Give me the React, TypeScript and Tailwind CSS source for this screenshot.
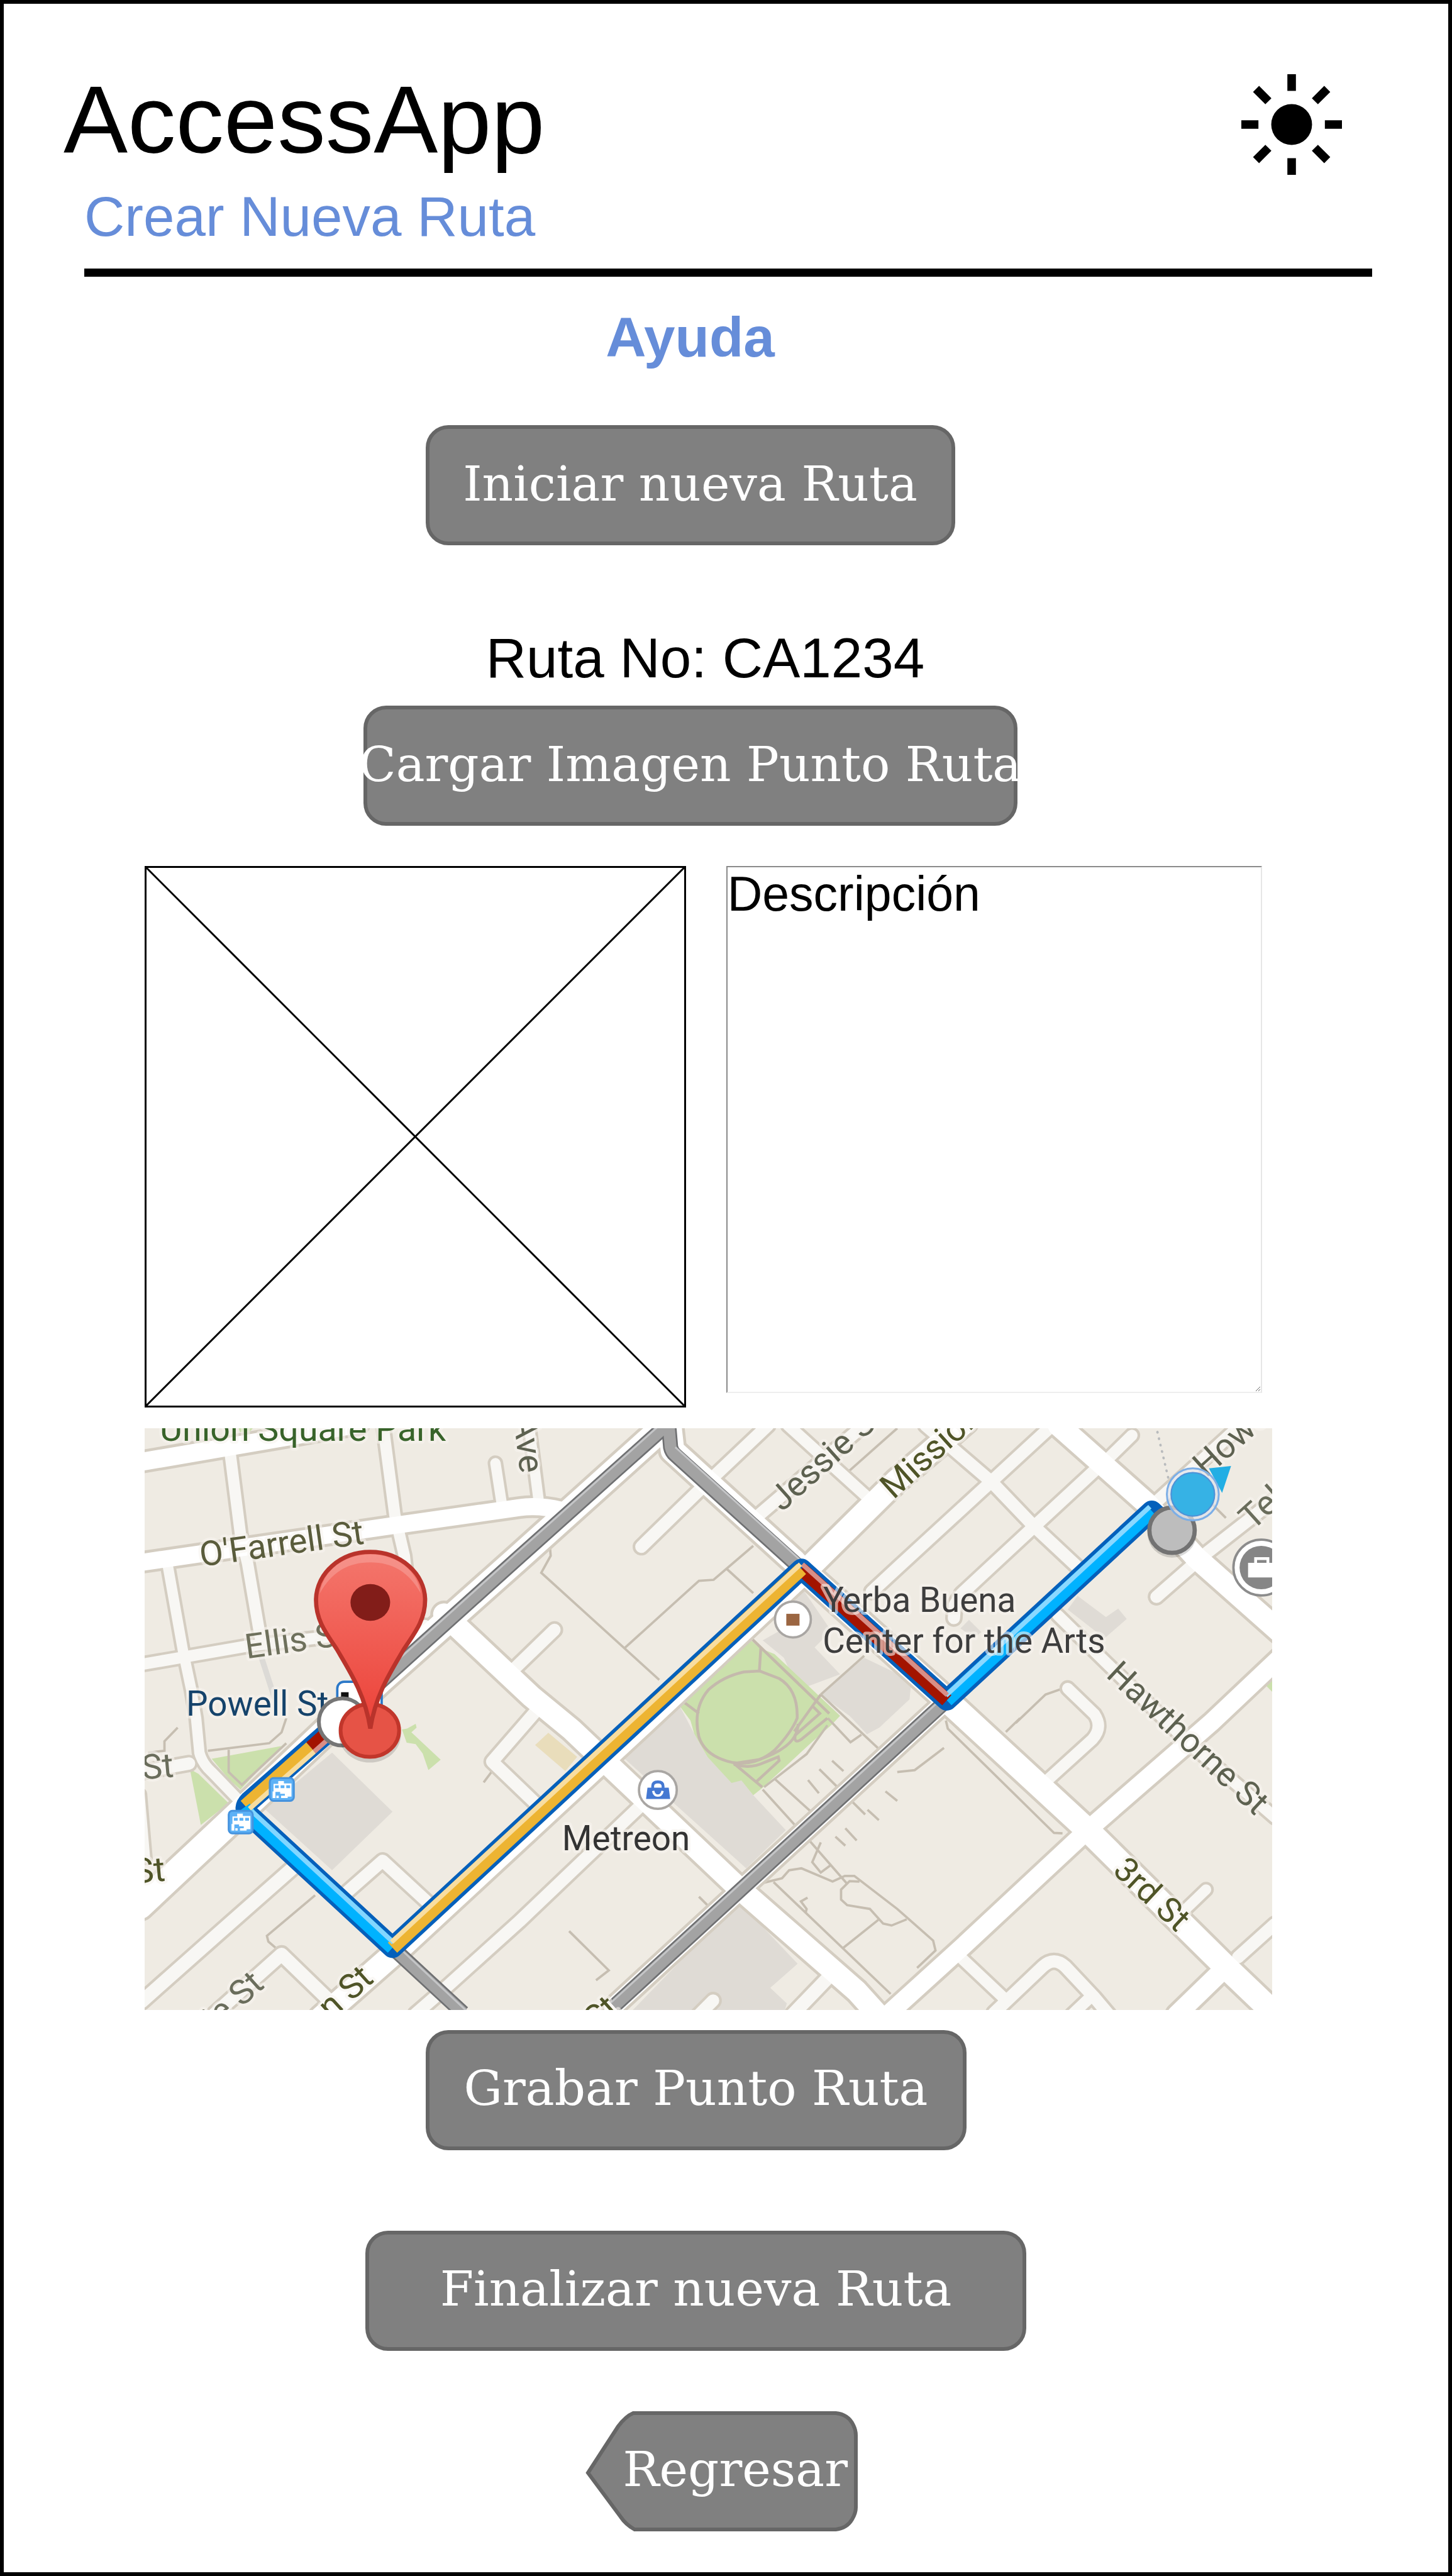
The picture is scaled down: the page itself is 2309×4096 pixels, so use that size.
import React from "react";

type Road = { d: string; w: number };

const SIDE_STREETS: Road[] = [
  { d: "M306 3525L519 3488L900 3444", w: 24 },
  { d: "M486 3070L509 3251L524 3312L552 3475", w: 24 },
  { d: "M811 3020L836 3210L856 3296L872 3440", w: 24 },
  { d: "M352 3300L387 3496L405 3581L415 3640L422 3713Q428 3736 448 3754L504 3812", w: 22 },
  { d: "M1049 3100L1063 3190", w: 22 },
  { d: "M1120 3020L1140 3175", w: 22 },
  { d: "M1669 3020L1840 3175", w: 24 },
  { d: "M1960 3020L2099 3139L2190 3234L2284 3322", w: 26 },
  { d: "M2240 3422L2344 3524L2517 3692L2700 3850", w: 24 },
  { d: "M1626 3020L1477 3161L1358 3277", w: 26 },
  { d: "M1600 3216L1836 3014", w: 26 },
  { d: "M2226 3022L2099 3139L1900 3322L1846 3372", w: 26 },
  { d: "M2326 3108L2190 3234L2036 3377L2022 3400L2020 3428", w: 26 },
  { d: "M2397 3041L2345 3092", w: 24 },
  { d: "M2706 3172L2559 3287L2449 3383", w: 26 },
  { d: "M2440 3190L2660 2990", w: 26 },
  { d: "M400 3736L300 3754", w: 26 },
  { d: "M2700 4076L2622 4146", w: 26 },
  { d: "M2554 4003L2505 4050", w: 22 },
  { d: "M2261 3577L2318 3632Q2336 3660 2313 3685L2215 3774", w: 24 },
  { d: "M2036 4148L2125 4232", w: 24 },
  { d: "M2105 4264L2208 4166Q2232 4144 2256 4166L2318 4232L2350 4270", w: 26 },
  { d: "M2310 4230L2270 4268", w: 24 },
  { d: "M1755 4188L1680 4266", w: 28 },
  { d: "M1510 4238L1480 4268", w: 26 },
  { d: "M1356 3826L1100 4070L948 4207L880 4266", w: 26 },
  { d: "M1141 3618L1042 3732L1140 3826", w: 26 },
  { d: "M1174 3453L1084 3540", w: 26 },
  { d: "M728 4014L810 3942L912 4036", w: 26 },
  { d: "M630 3948L460 4098L300 4240", w: 28 },
  { d: "M455 4266L596 4140L695 4236", w: 28 },
  { d: "M300 3800L312 3940", w: 12 },
];

const MAIN_STREETS: Road[] = [
  { d: "M300 3097L632 3040L760 3017", w: 38 },
  { d: "M300 3310L820 3234L1100 3194Q1140 3188 1190 3200", w: 36 },
  { d: "M1409 3020L1100 3298L810 3556L693 3664L489 3857L296 4038", w: 54 },
  { d: "M1418 3020L1424 3073L1682 3308L1697 3324L2005 3602L2303 3877L2596 4167L2710 4276", w: 50 },
  { d: "M2242 3020L2428 3185L2533 3300L2710 3457", w: 46 },
  { d: "M2045 3012L1900 3136L1708 3326L1360 3652L846 4128L680 4274", w: 48 },
  { d: "M2005 3602L1298 4252", w: 38 },
  { d: "M940 3420L1125 3594L1210 3664L1559 3995L1814 4218L1870 4280", w: 46 },
  { d: "M2710 3512L2564 3650L2303 3877L2036 4126L1886 4262", w: 38 },
  { d: "M2596 4167L2492 4268", w: 40 },
];

const BUILDINGS = [
  "M703 3713L831 3838L703 3962L560 3832Z",
  "M1314 3718L1439 3614L1470 3673L1498 3722L1549 3775L1570 3770L1595 3803L1664 3877L1580 3958Z",
  "M1564 4028L1689 4160L1631 4211L1666 4244L1661 4262L1336 4262Z",
  "M1702 3370L1640 3435L1660 3450L1615 3475L1660 3512L1690 3580L1779 3547L1725 3490L1760 3455Z",
  "M1830 3512L1930 3560L1926 3600L1862 3660L1836 3674L1800 3636L1738 3590Z",
  "M2282 3381L2342 3426L2368 3408L2386 3430L2339 3471L2261 3410Z",
  "M2052 3432L2078 3458L2062 3470L2034 3450Z",
];

const PARKS = [
  "M448 3726L596 3699L606 3688L509 3791L486 3771Z",
  "M402 3748L420 3758L484 3820L425 3866Z",
  "M851 3664L862 3662L880 3652L882 3660L871 3670L933 3728L907 3750L895 3715L880 3695L861 3692Z",
  "M1590 3475L1610 3492L1640 3504L1779 3635L1760 3655L1720 3690L1615 3787L1595 3803L1570 3772L1549 3777L1498 3722L1470 3673L1462 3645L1439 3614Z",
  "M2694 3560L2682 3572L2694 3584Z",
  "M505 3026L535 3026L530 3032L508 3034Z",
];

const FOOTPATHS = [
  "M1164 3271L1166 3296L1146 3332L1396 3559",
  "M1322 3492L1480 3349L1511 3347L1595 3275",
  "M1539 3324L1595 3375",
  "M1900 3026L1794 3120",
  "M1615 3791L1682 3865",
  "M1641 3769L1715 3836",
  "M1762 3730L1786 3752",
  "M1735 3748L1832 3844",
  "M1711 3771L1734 3799",
  "M1837 3834L1861 3856",
  "M1875 3795L1900 3815",
  "M1790 3873L1814 3899",
  "M1769 3891L1790 3910",
  "M1712 3897L1794 3991",
  "M1738 3903L1720 3945L1738 3967L1758 3952",
  "M1615 3989L1656 3979L1671 3962L1697 3958L1763 3986L1789 3974L1809 3974L1900 4044L1976 4111L1981 4132L1942 4169",
  "M1820 3986L1799 3985L1781 4003L1781 4024L1794 4036L1842 4044L1870 4075L1888 4079L1920 4066",
  "M1860 4067L1786 4126",
  "M1638 3987L1886 4224",
  "M1710 4020L1696 4028L1708 4044L1706 4052",
  "M1480 4018L1500 4038",
  "M1205 4091L1289 4174L1262 4195",
  "M1900 3754L1937 3750L1999 3703",
  "M2003 3645L2007 3662L2232 3883L2250 3884",
  "M2151 3650L2214 3590L2245 3579",
  "M2130 3669L2160 3640",
  "M667 4015L565 4101L568 4113L583 4126",
  "M313 3713L348 3709L348 3689L376 3660",
  "M440 3709L570 3693L596 3670L606 3640",
  "M484 3707L484 3754L512 3781L606 3693",
  "M1042 3752L1024 3776",
  "M1738 3590L1830 3508",
  "M1738 3590L1862 3706",
  "M1753 3640L1801 3691L1824 3675",
  "M1618 3786L1708 3716L1752 3655",
  "M2560 3180L2596 3216",
];

const PARK_PATHS = [
  "M1611 3492L1608 3540",
  "M1592 3472L1756 3630",
  "M1448 3606L1480 3630",
  "M1738 3590L1682 3668",
  "M1690 3652Q1690 3700 1606 3728L1554 3736",
  "M1554 3736L1614 3786",
  "M1554 3738Q1590 3748 1618 3734L1648 3722L1650 3730L1602 3774",
  "M1722 3616L1736 3630L1684 3676Q1680 3696 1698 3684L1752 3640",
];

const GREY_ROUTES = [
  "M1411 3020L1100 3298L800 3568",
  "M1416 3020L1420 3066Q1422 3076 1430 3083L1690 3318",
  "M2005 3602L1300 4250",
  "M831 4126L980 4264",
];

const ROUTE_LINE = "M719 3648L528 3816Q514 3830 526 3844L831 4126L1697 3324L2005 3602L2439 3201L2470 3230";

const ROUTE_PARTS = [
  { d: "M719 3648L658 3702", c: "#a31400", h: "#d88e86", hd: "M727 3656L665 3711" },
  { d: "M658 3702L519 3826", c: "#edb432", h: "#f8dda0", hd: "M665 3711L528 3832" },
  { d: "M517 3829L531 3849L831 4126", c: "#00b2ff", h: "#82d6ff", hd: "M532 3836L833 4115" },
  { d: "M2005 3602L2439 3201", c: "#00b2ff", h: "#8ad8ff", hd: "M2003 3592L2435 3192" },
  { d: "M1697 3324L2005 3602", c: "#a31400", h: "#d88e86", hd: "M1699 3314L2006 3591" },
  { d: "M831 4126L1697 3324", c: "#edb432", h: "#f8dda0", hd: "M829 4114L1695 3314" },
];

type Label = { t: string; x: number; y: number; r?: number; c: string; s?: number; end?: boolean };

const LABELS: Label[] = [
  { t: "Union Square Park", x: 338, y: 3053, c: "#38632a", s: 74 },
  { t: "O'Farrell St", x: 426, y: 3319, r: -8, c: "#5a5c3c" },
  { t: "Ellis St", x: 522, y: 3514, r: -8, c: "#6e705c" },
  { t: "Powell St", x: 394, y: 3634, c: "#15436b" },
  { t: "Ave", x: 1087, y: 3004, r: 83, c: "#5d6150" },
  { t: "Jessie St", x: 1656, y: 3204, r: -42, c: "#5d6150" },
  { t: "Mission St", x: 1892, y: 3178, r: -42, c: "#4f5427" },
  { t: "Howard St", x: 2554, y: 3132, r: -42, c: "#5d6150" },
  { t: "Tehama", x: 2652, y: 3244, r: -42, c: "#6a6d5c" },
  { t: "Hawthorne St", x: 2340, y: 3551, r: 43, c: "#5d6150", s: 72 },
  { t: "3rd St", x: 2354, y: 3966, r: 43, c: "#4f5427", s: 72 },
  { t: "St", x: 302, y: 3770, r: -5, c: "#6a6d5c" },
  { t: "St", x: 284, y: 3990, r: -5, c: "#4f5427" },
  { t: "ie St", x: 562, y: 4208, r: -42, c: "#6a6d5c", end: true },
  { t: "n St", x: 794, y: 4196, r: -42, c: "#4f5427", end: true },
  { t: "St", x: 1314, y: 4260, r: -42, c: "#4f5427", end: true },
  { t: "Yerba Buena", x: 1743, y: 3415, c: "#3d3d3d" },
  { t: "Center for the Arts", x: 1742, y: 3501, c: "#3d3d3d" },
  { t: "Metreon", x: 1190, y: 3920, c: "#333333" },
];

function TransitStop({ x, y }: { x: number; y: number }) {
  return (
    <g transform={`translate(${x} ${y})`}>
      <rect width="51" height="48" rx="8" fill="#5db1f6" stroke="#4593de" strokeWidth="4" />
      <path d="M18 6H30V11H46V39H38V42H24V37H32V33H22V29H8V12H18Z" fill="#fff" />
      <path d="M11 15H19V21H11ZM23 15H31V21H23ZM35 15H43V21H35Z" fill="#5db1f6" />
      <path d="M6 28H12V42H6ZM14 37H19V42H14Z" fill="#fff" />
    </g>
  );
}

function RouteMap() {
  return (
    <svg
      viewBox="306 3026 2388 1232"
      role="img"
      aria-label="Mapa de la ruta"
      className="block w-full font-['Roboto',sans-serif] font-normal"
    >
      <defs>
        <linearGradient id="pin" x1="0" y1="0" x2="0" y2="1">
          <stop offset="0" stopColor="#f4776d" />
          <stop offset="1" stopColor="#ec4138" />
        </linearGradient>
      </defs>
      <rect x="306" y="3026" width="2388" height="1232" fill="#efebe3" />
      {BUILDINGS.map((d) => (
        <path key={d} d={d} fill="#dfdbd5" />
      ))}
      <path d="M1161 3671L1222 3722L1197 3752L1133 3697Z" fill="#e9ddbb" />
      {PARKS.map((d) => (
        <path key={d} d={d} fill="#cbe0ac" />
      ))}
      <g fill="none" stroke="#c6beb1" strokeWidth="5">
        {FOOTPATHS.map((d) => (
          <path key={d} d={d} />
        ))}
      </g>
      <g fill="none" stroke="#c4b9ac" strokeWidth="6">
        <path d="M1608 3540L1650 3556Q1690 3580 1688 3640Q1676 3670 1640 3708Q1600 3742 1552 3734Q1494 3722 1480 3680Q1466 3620 1500 3580Q1530 3552 1575 3542Z" />
        {PARK_PATHS.map((d) => (
          <path key={d} d={d} />
        ))}
      </g>
      <path d="M553 3510L582 3600" stroke="#dcdad6" strokeWidth="12" fill="none" />
      <g fill="none" stroke="#d4cdc1" strokeLinecap="round" strokeLinejoin="round">
        {SIDE_STREETS.map((r) => (
          <path key={r.d} d={r.d} strokeWidth={r.w + 11} />
        ))}
        {MAIN_STREETS.map((r) => (
          <path key={r.d} d={r.d} strokeWidth={r.w + 12} />
        ))}
      </g>
      <g fill="none" stroke="#f8f7f4" strokeLinecap="round" strokeLinejoin="round">
        {SIDE_STREETS.map((r) => (
          <path key={r.d} d={r.d} strokeWidth={r.w} />
        ))}
      </g>
      <g fill="none" stroke="#ffffff" strokeLinecap="round" strokeLinejoin="round">
        {MAIN_STREETS.map((r) => (
          <path key={r.d} d={r.d} strokeWidth={r.w} />
        ))}
      </g>
      <path d="M2451 3034L2476 3140" stroke="#b9bbbd" strokeWidth="5" strokeDasharray="1 13" strokeLinecap="round" fill="none" />
      <g fill="none" strokeLinejoin="round">
        {GREY_ROUTES.map((d) => (
          <path key={d} d={d} stroke="#6f7072" strokeWidth="32" />
        ))}
        {GREY_ROUTES.map((d) => (
          <path key={d} d={d} stroke="#a3a3a3" strokeWidth="25" />
        ))}
        <g stroke="#c4c5c7" strokeWidth="4">
          <path d="M1396 3020L1093 3291L800 3555" />
          <path d="M1430 3066L1700 3310" />
          <path d="M1995 3598L1293 4243" />
          <path d="M845 4126L992 4264" />
        </g>
      </g>
      <path d={ROUTE_LINE} fill="none" stroke="#0560bb" strokeWidth="44" strokeLinejoin="round" strokeLinecap="round" />
      <g fill="none" strokeLinejoin="round">
        {ROUTE_PARTS.map((p) => (
          <path key={p.d} d={p.d} stroke={p.c} strokeWidth="29" />
        ))}
        {ROUTE_PARTS.map((p) => (
          <path key={p.hd} d={p.hd} stroke={p.h} strokeWidth="10" />
        ))}
      </g>

      <rect x="714" y="3563" width="94" height="90" rx="14" fill="#fff" stroke="#2b78c8" strokeWidth="5" />
      <rect x="722" y="3585" width="16" height="16" fill="#111" />

      <circle cx="1679" cy="3431" r="38" fill="#fff" stroke="#a9a6a3" strokeWidth="5" />
      <rect x="1665" y="3419" width="28" height="25" fill="#9b6642" />
      <circle cx="1393" cy="3792" r="40" fill="#fff" stroke="#a9a6a3" strokeWidth="5" />
      <path d="M1371 3787H1416L1419 3811H1368Z" fill="#4478d2" />
      <path d="M1382 3788V3784Q1382 3775 1393 3775Q1404 3775 1404 3784V3788" fill="none" stroke="#4478d2" strokeWidth="6" />
      <path d="M1383 3794Q1385 3804 1393 3804Q1401 3804 1403 3794" fill="none" stroke="#fff" strokeWidth="5" />
      <circle cx="2671" cy="3321" r="59" fill="#fff" stroke="#8c8c8c" strokeWidth="5" />
      <circle cx="2671" cy="3321" r="46" fill="#868686" />
      <path d="M2643 3311H2656V3299H2688V3311H2700V3342H2643ZM2662 3305V3311H2682V3305Z" fill="#fff" fillRule="evenodd" />

      <circle cx="2482" cy="3248" r="52" fill="#000" opacity="0.15" />
      <circle cx="2482" cy="3242" r="48" fill="#bdbdbd" stroke="#727272" strokeWidth="9" />

      {LABELS.map((l, i) => (
        <text
          key={i}
          transform={`translate(${l.x} ${l.y}) rotate(${l.r ?? 0})`}
          fontSize={l.s ?? 73}
          fill={l.c}
          stroke="#f6f4ef"
          strokeOpacity="0.6"
          strokeWidth="12"
          strokeLinejoin="round"
          paintOrder="stroke"
          textAnchor={l.end ? "end" : "start"}
        >
          {l.t}
        </text>
      ))}

      <path d="M2560 3111L2607 3106L2588 3163Z" fill="#22aee4" />
      <circle cx="2526" cy="3166" r="55" fill="#dfe3ea" fillOpacity="0.7" stroke="#7caee6" strokeWidth="4" />
      <circle cx="2526" cy="3166" r="46" fill="#36b2e5" stroke="#4c93d8" strokeWidth="3" />

      <TransitStop x={571} y={3767} />
      <TransitStop x={484} y={3836} />

      <circle cx="725" cy="3648" r="50" fill="#fff" stroke="#767676" strokeWidth="8" />
      <ellipse cx="783" cy="3674" rx="66" ry="60" fill="#000" opacity="0.14" />
      <ellipse cx="783" cy="3666" rx="62" ry="56" fill="#e65346" stroke="#c1362b" strokeWidth="8" />
      <path
        d="M784 3288C848 3288 900 3334 900 3390C900 3434 876 3462 855 3494C828 3540 795 3590 784 3662C773 3590 740 3540 713 3494C692 3462 669 3434 669 3390C669 3334 720 3288 784 3288Z"
        fill="url(#pin)"
        stroke="#b9332b"
        strokeWidth="9"
      />
      <path d="M677 3376C684 3326 730 3293 784 3293C838 3293 884 3326 891 3376C866 3330 830 3310 784 3310C738 3310 702 3330 677 3376Z" fill="#fff" opacity="0.2" />
      <ellipse cx="784" cy="3395" rx="42" ry="39" fill="#821d19" />
    </svg>
  );
}

function SunIcon() {
  return (
    <svg viewBox="-106 -106 212 212" className="w-40" aria-hidden="true">
      <circle r="43" />
      <g stroke="#000" strokeWidth="18">
        <path d="M0 -106V-71M0 106V71M-106 0H-70M106 0H70M-75 -75L-49 -49M75 -75L49 -49M-75 75L-49 49M75 75L49 49" />
      </g>
    </svg>
  );
}

function WireButton({ className, children }: { className: string; children: React.ReactNode }) {
  return (
    <button
      type="button"
      className={`flex h-[191px] max-w-full items-center justify-center rounded-[36px] border-[6px] border-[#666666] bg-[#808080] pb-1 text-[77px] whitespace-nowrap text-white font-['DejaVu_Serif',serif] ${className}`}
    >
      <span>{children}</span>
    </button>
  );
}

export default function App() {
  return (
    <div className="flex min-h-screen flex-col border-[6px] border-black bg-white text-black font-['Liberation_Sans',Arial,sans-serif]">
      <header className="pt-24">
        <div className="flex items-start justify-between pr-[169px] pl-[95px]">
          <h1 className="text-[153px] leading-[176px]">AccessApp</h1>
          <button type="button" aria-label="Cambiar brillo" className="mt-4">
            <SunIcon />
          </button>
        </div>
        <p className="mt-[14px] pl-32 text-[89px] leading-[104px] text-[#668dd9]">Crear Nueva Ruta</p>
        <hr className="mt-[31px] mr-[121px] ml-32 border-t-[13px] border-black" />
      </header>

      <main className="flex flex-col">
        <div className="flex flex-col items-center pr-[114px]">
          <a href="#ayuda" className="mt-11 text-[89px] leading-[104px] font-bold text-[#668dd9]">
            Ayuda
          </a>
          <WireButton className="mt-[88px] w-[842px]">Iniciar nueva Ruta</WireButton>
          <p className="mt-[127px] pl-12 text-[89px] leading-[104px]">Ruta No: CA1234</p>
          <WireButton className="mt-6 w-[1040px]">Cargar Imagen Punto Ruta</WireButton>
        </div>

        <div className="mt-16 pr-[280px] pl-56">
          <div className="flex items-start gap-16">
            <div className="aspect-square w-[48%] border-[3px] border-black">
              <svg viewBox="0 0 100 100" className="block size-full" role="img" aria-label="Imagen del punto">
                <path d="M0 0L100 100M100 0L0 100" stroke="#000" strokeWidth="0.35" />
              </svg>
            </div>
            <textarea
              aria-label="Descripción"
              defaultValue="Descripción"
              className="h-[838px] w-[852px] min-w-0 border-2 border-t-[#8a8a8a] border-r-[#e6e6e6] border-b-[#eeeeee] border-l-[#8a8a8a] text-[77px] leading-[84px]"
            />
          </div>
          <div className="mt-[33px]">
            <RouteMap />
          </div>
        </div>

        <div className="flex flex-col items-center pr-24">
          <WireButton className="mt-8 w-[860px]">Grabar Punto Ruta</WireButton>
          <WireButton className="mt-32 w-[1051px]">Finalizar nueva Ruta</WireButton>
          <div className="mt-24 pl-[82px]">
            <button
              type="button"
              className="relative flex h-[191px] w-[433px] items-center justify-end pr-4 pb-1 text-[77px] whitespace-nowrap text-white font-['DejaVu_Serif',serif]"
            >
              <svg viewBox="0 0 433 191" className="absolute inset-0 size-full" aria-hidden="true">
                <path
                  d="M4 98L52 24Q64 8 76 3H398Q418 5 426 22Q430 30 430 38V153Q430 162 424 172Q416 186 398 188H78Q64 180 56 168Z"
                  fill="#808080"
                  stroke="#666666"
                  strokeWidth="6"
                />
              </svg>
              <span className="relative">Regresar</span>
            </button>
          </div>
        </div>
      </main>
    </div>
  );
}
